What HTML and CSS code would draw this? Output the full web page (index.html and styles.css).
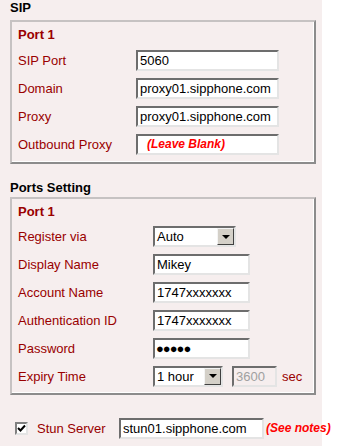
FILE: index.html
```html
<!DOCTYPE html>
<html lang="en">
<head>
    <meta charset="UTF-8">
    <title>SIP Settings</title>
    <link rel="stylesheet" href="styles.css">
</head>
<body>
    <div class="page">
        <h3 class="heading">SIP</h3>
        <div class="group sip-group">
            <div class="port-title">Port 1</div>
            <div class="row">
                <label>SIP Port</label>
                <input type="text" class="field wide" value="5060">
            </div>
            <div class="row">
                <label>Domain</label>
                <input type="text" class="field wide" value="proxy01.sipphone.com">
            </div>
            <div class="row">
                <label>Proxy</label>
                <input type="text" class="field wide" value="proxy01.sipphone.com">
            </div>
            <div class="row">
                <label>Outbound Proxy</label>
                <div class="field wide note-field"><span class="note">(Leave Blank)</span></div>
            </div>
        </div>

        <h3 class="heading second">Ports Setting</h3>
        <div class="group ports-group">
            <div class="port-title">Port 1</div>
            <div class="row first">
                <label>Register via</label>
                <div class="select reg-select">
                    <span class="select-text">Auto</span>
                    <span class="select-btn"><span class="arrow"></span></span>
                </div>
            </div>
            <div class="row">
                <label>Display Name</label>
                <input type="text" class="field narrow" value="Mikey">
            </div>
            <div class="row">
                <label>Account Name</label>
                <input type="text" class="field narrow" value="1747xxxxxxx">
            </div>
            <div class="row">
                <label>Authentication ID</label>
                <input type="text" class="field narrow" value="1747xxxxxxx">
            </div>
            <div class="row">
                <label>Password</label>
                <div class="field narrow dots">&#9679;&#9679;&#9679;&#9679;&#9679;</div>
            </div>
            <div class="row">
                <label>Expiry Time</label>
                <div class="expiry">
                    <div class="select exp-select">
                        <span class="select-text">1 hour</span>
                        <span class="select-btn"><span class="arrow"></span></span>
                    </div>
                    <input type="text" class="field secs" value="3600" disabled>
                    <span class="unit">sec</span>
                </div>
            </div>
        </div>

        <div class="stun-row">
            <span class="check">
                <svg width="9" height="9" viewBox="0 0 9 9"><path d="M1 4 L3.5 6.5 L8 1.5" fill="none" stroke="#000" stroke-width="2"/></svg>
            </span>
            <span class="stun-label">Stun Server</span>
            <input type="text" class="field stun" value="stun01.sipphone.com">
            <span class="note">(See notes)</span>
        </div>
    </div>
</body>
</html>
```

FILE: styles.css
```css
body {
    margin: 0;
    padding: 0;
    font-family: "Liberation Sans", Arial, sans-serif;
    font-size: 13px;
    background-color: #fff;
}
.page {
    width: 322px;
    height: 446px;
    background-color: #f6eeee;
}
.heading {
    margin: 0 0 0 10px;
    font-size: 13px;
    font-weight: bold;
    line-height: 16px;
    color: #000;
    height: 20px;
}
.heading.second {
    margin-top: 16px;
    height: 17px;
    line-height: 16px;
}
.group {
    margin-left: 10px;
    width: 296px;
    border: 2px solid;
    border-color: #c6c2c2 #8c8c8c #8c8c8c #c6c2c2;
    box-shadow: inset -1px -1px 0 #fff;
    padding: 5px 0 4px 6px;
}
.ports-group {
    padding-bottom: 3px;
}
.port-title {
    color: #990000;
    font-weight: bold;
    height: 19px;
    line-height: 16px;
}
.row {
    display: grid;
    grid-template-columns: 118px auto;
    align-items: center;
    height: 28px;
}
.ports-group .row {
    grid-template-columns: 135px auto;
}
.ports-group .row.first {
    height: 27px;
}
.row label {
    color: #990000;
}
.field {
    box-sizing: border-box;
    height: 21px;
    border: 2px solid;
    border-color: #6d6d6d #e4e4e4 #e4e4e4 #6d6d6d;
    background-color: #fff;
    font-family: "Liberation Sans", Arial, sans-serif;
    font-size: 13px;
    color: #000;
    padding: 0 2px;
    margin: 0;
    outline: none;
}
.wide {
    width: 143px;
}
.narrow {
    width: 97px;
}
.note-field {
    display: flex;
    align-items: center;
    padding-left: 9px;
}
.note {
    color: #ff0000;
    font-weight: bold;
    font-style: italic;
    font-size: 12px;
    white-space: nowrap;
}
.dots {
    display: flex;
    align-items: center;
    font-size: 13px;
    letter-spacing: -1px;
    padding-left: 1px;
}
.select {
    box-sizing: border-box;
    height: 21px;
    display: flex;
    align-items: center;
    justify-content: space-between;
    border: 2px solid;
    border-color: #6d6d6d #e4e4e4 #e4e4e4 #6d6d6d;
    background-color: #fff;
    padding-left: 2px;
}
.reg-select {
    width: 83px;
}
.exp-select {
    width: 70px;
}
.select-btn {
    box-sizing: border-box;
    width: 17px;
    height: 17px;
    background-color: #d4d0c8;
    border: 1px solid;
    border-color: #f4f4f4 #404040 #404040 #f4f4f4;
    display: flex;
    align-items: center;
    justify-content: center;
}
.arrow {
    width: 0;
    height: 0;
    border-left: 4px solid transparent;
    border-right: 4px solid transparent;
    border-top: 4px solid #000;
}
.expiry {
    display: flex;
    align-items: center;
}
.secs {
    width: 45px;
    margin-left: 9px;
    background-color: #f6eeee;
    color: #a0a0a0;
}
.unit {
    color: #990000;
    margin-left: 5px;
}
.stun-row {
    display: flex;
    align-items: center;
    height: 28px;
    margin-top: 19px;
    padding-left: 15px;
    white-space: nowrap;
}
.check {
    box-sizing: border-box;
    width: 13px;
    height: 13px;
    border: 2px solid;
    border-color: #808080 #e4e4e4 #e4e4e4 #808080;
    background-color: #fff;
    display: flex;
    align-items: center;
    justify-content: center;
    flex-shrink: 0;
}
.stun-label {
    color: #990000;
    margin-left: 9px;
    width: 82px;
    flex-shrink: 0;
}
.stun {
    width: 145px;
    flex-shrink: 0;
}
.stun-row .note {
    margin-left: 2px;
}
```
